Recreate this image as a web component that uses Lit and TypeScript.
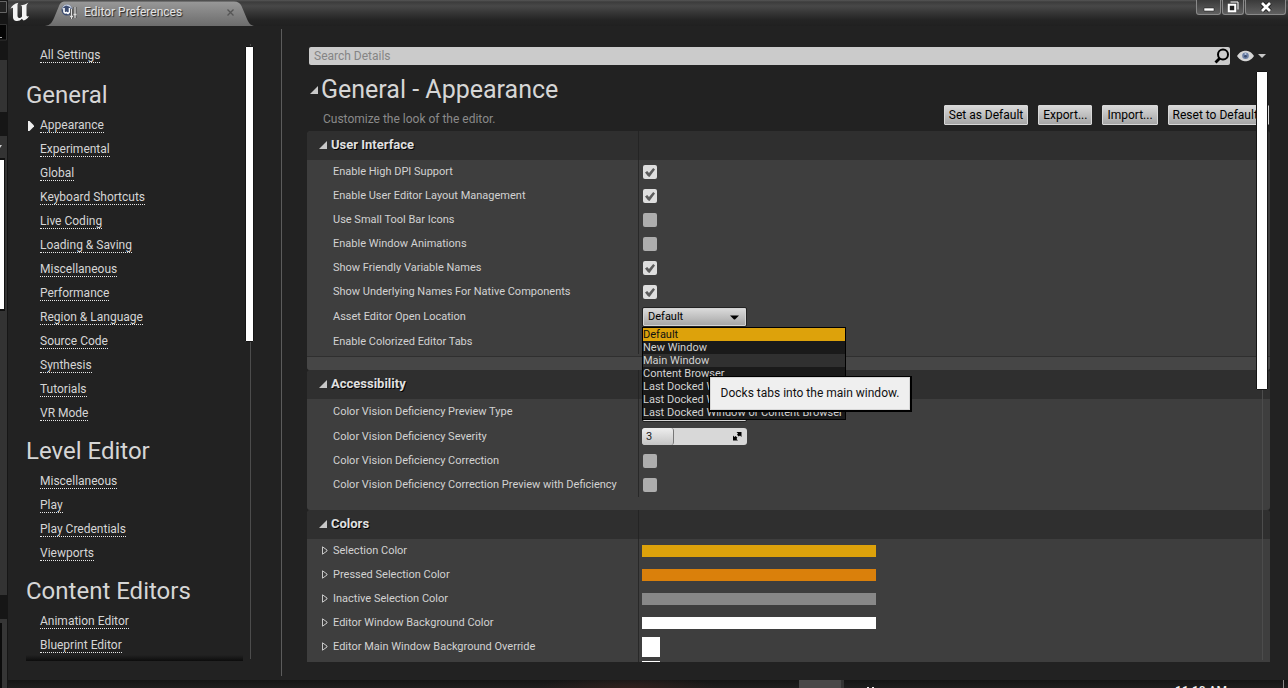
import { LitElement, html, css, svg, nothing } from "lit";
import { customElement, property } from "lit/decorators.js";
import { classMap } from "lit/directives/class-map.js";

type Kind = "check" | "combo" | "slider" | "color" | "swatch" | "empty";

interface Row {
  name: string;
  kind: Kind;
  checked?: boolean;
  color?: string;
  expandable?: boolean;
  open?: boolean;
}

interface Category {
  title: string;
  rows: Row[];
  advanced?: boolean;
}

const NAV = [
  {
    title: "General",
    items: [
      "Appearance", "Experimental", "Global", "Keyboard Shortcuts", "Live Coding",
      "Loading & Saving", "Miscellaneous", "Performance", "Region & Language",
      "Source Code", "Synthesis", "Tutorials", "VR Mode",
    ],
  },
  { title: "Level Editor", items: ["Miscellaneous", "Play", "Play Credentials", "Viewports"] },
  { title: "Content Editors", items: ["Animation Editor", "Blueprint Editor"] },
];

const CATEGORIES: Category[] = [
  {
    title: "User Interface",
    advanced: true,
    rows: [
      { name: "Enable High DPI Support", kind: "check", checked: true },
      { name: "Enable User Editor Layout Management", kind: "check", checked: true },
      { name: "Use Small Tool Bar Icons", kind: "check" },
      { name: "Enable Window Animations", kind: "check" },
      { name: "Show Friendly Variable Names", kind: "check", checked: true },
      { name: "Show Underlying Names For Native Components", kind: "check", checked: true },
      { name: "Asset Editor Open Location", kind: "combo", open: true },
      { name: "Enable Colorized Editor Tabs", kind: "empty" },
    ],
  },
  {
    title: "Accessibility",
    rows: [
      { name: "Color Vision Deficiency Preview Type", kind: "combo" },
      { name: "Color Vision Deficiency Severity", kind: "slider" },
      { name: "Color Vision Deficiency Correction", kind: "check" },
      { name: "Color Vision Deficiency Correction Preview with Deficiency", kind: "check" },
    ],
  },
  {
    title: "Colors",
    rows: [
      { name: "Selection Color", kind: "color", color: "#dda20b", expandable: true },
      { name: "Pressed Selection Color", kind: "color", color: "#da800b", expandable: true },
      { name: "Inactive Selection Color", kind: "color", color: "#888888", expandable: true },
      { name: "Editor Window Background Color", kind: "color", color: "#ffffff", expandable: true },
      { name: "Editor Main Window Background Override", kind: "swatch", expandable: true },
      { name: "", kind: "swatch" },
    ],
  },
];

const LOCATIONS = [
  "Default", "New Window", "Main Window", "Content Browser",
  "Last Docked Window or New Window", "Last Docked Window or Main Window",
  "Last Docked Window or Content Browser",
];

const openTriangle = svg`<svg width="8" height="8" viewBox="0 0 8 8" aria-hidden="true"><path d="M8 0V8H0Z" fill="#c8c8c8"/></svg>`;

@customElement("property-row")
class PropertyRow extends LitElement {
  @property({ attribute: false }) row!: Row;

  static styles = css`
    :host { display: grid; grid-template-columns: 331px minmax(0, 1fr); font-size: 11px; color: #d2d2d2; height: 24px; }
    :host(.tall) { height: 25px; }
    .name { display: flex; align-items: center; padding-left: 15px; padding-bottom: 1px; white-space: nowrap; }
    .arrow { width: 11px; display: flex; }
    .value { display: flex; align-items: center; border-left: 1px solid #282828; padding-left: 3px; }
    input, select, button { font: inherit; margin: 0; }
    .check { appearance: none; width: 14px; height: 14px; margin-left: 1px; border-radius: 2px; background: #adadad; }
    .check:checked { background: #dedede; }
    .check:checked::before { content: ""; display: block; width: 10px; height: 9px; margin: 3px 2px; background: #5c5c5c; clip-path: polygon(0 50%, 22% 32%, 40% 55%, 82% 0, 100% 16%, 45% 100%, 30% 92%); }
    .combo { position: relative; display: flex; width: 105px; height: 20px; }
    .select { appearance: none; width: 105px; height: 20px; padding: 0 5px; border: 1px solid #222; outline: 0; border-radius: 2px; color: #000; background: linear-gradient(#dcdcdc, #a4a4a4); box-shadow: inset 0 0 0 1px #d4d4d4; }
    .caret { position: absolute; right: 8px; top: 8px; pointer-events: none; }
    .menu { position: absolute; z-index: 2; left: 0; top: 20px; width: 202px; margin: 0; padding: 0; border: 1px solid #000; list-style: none; background: #1a1a1a; }
    .option { height: 13px; line-height: 13px; white-space: nowrap; color: #d2d2d2; }
    .option.picked { background: #dda20b; color: #111; }
    .option.hover { background: #303030; }
    .tip { position: absolute; z-index: 3; left: 67px; top: 69px; box-sizing: border-box; width: 203px; height: 36px; line-height: 32px; text-align: center; font-size: 12px; color: #111; white-space: nowrap; background: #efefef; border: solid #000; border-width: 1px 2px 2px 1px; box-shadow: inset 0 0 0 1px #d8d8d8; }
    .slider { position: relative; display: flex; align-items: center; width: 105px; height: 17px; border-radius: 3px; background: #d8d8d8; overflow: hidden; }
    .fill { width: 32px; height: 17px; box-sizing: border-box; border-right: 1px solid #777; border-radius: 3px; background: linear-gradient(#eee, #c4c4c4); }
    .number { position: absolute; inset: 0; width: 105px; padding: 0 4px; border: 0; color: #222; background: none; }
    .expand { position: absolute; right: 5px; top: 4px; }
    .bar { width: 234px; height: 12px; padding: 0; border: 0; }
    .swatch { width: 18px; height: 20px; padding: 0; border: 0; background: #fff; }
  `;

  private control() {
    const r = this.row;
    switch (r.kind) {
      case "check":
        return html`<input id="field" class="check" type="checkbox" .checked=${!!r.checked} />`;
      case "combo":
        return html`<div class="combo">
          <select id="field" class="select"><option>${r.open ? "Default" : "Normal Vision"}</option></select>
          <svg class="caret" width="9" height="5" viewBox="0 0 9 5" aria-hidden="true"><path d="M0 0.5H9L5 4.5H4Z" /></svg>
          ${r.open
            ? html`<ul class="menu" role="listbox" aria-label=${r.name}>
                  ${LOCATIONS.map((l, i) => html`<li role="option" aria-selected=${i === 0 ? "true" : "false"}
                    class=${classMap({ option: true, picked: i === 0, hover: i === 2 })}>${l}</li>`)}
                </ul>
                <div class="tip" role="tooltip">Docks tabs into the main window.</div>`
            : nothing}
        </div>`;
      case "slider":
        return html`<div class="slider">
          <div class="fill"></div>
          <input id="field" class="number" type="text" inputmode="numeric" value="3" />
          <svg class="expand" width="9" height="9" viewBox="0 0 9 9" aria-hidden="true"><path d="M3.500 0H8.500V5L7 3.500L5.800 4.600L4 2.800L5 1.600ZM5 8.500H0V3.500L1.500 5L2.600 4L4.400 5.800L3.500 7Z" /></svg>
        </div>`;
      case "color":
        return html`<button id="field" class="bar" style="background:${r.color}"></button>`;
      case "swatch":
        return html`<button id="field" class="swatch"></button>`;
      default:
        return nothing;
    }
  }

  render() {
    const r = this.row;
    return html`
      <label class="name" for="field">
        <span class="arrow">${r.expandable
          ? svg`<svg width="6" height="9" viewBox="0 0 6 9" aria-hidden="true"><path d="M0.5 0.8V8.2L5 5V4Z" fill="none" stroke="#c8c8c8"/></svg>`
          : nothing}</span>${r.name}
      </label>
      <div class="value">${this.control()}</div>`;
  }
}

@customElement("app-root")
class AppRoot extends LitElement {
  static styles = css`
    :host { display: grid; grid-template: minmax(0, 1fr) 8px / 8px minmax(0, 1fr); height: 100vh; overflow: hidden; font-family: Roboto, "Liberation Sans", sans-serif; color: #d6d6d6; background: #181818; }
    .behind { grid-row: 1 / 3; overflow: hidden; }
    .behind svg { display: block; }
    .window { display: flex; flex-direction: column; background: #222; min-width: 0; min-height: 0; }
    .titlebar { display: flex; height: 26px; background: linear-gradient(#565656 0, #3c3c3c 2px, #484848 6px, #383838 12px, #242424 20px, #202020 26px); }
    .logo { padding: 2px 0 0 2px; width: 32px; }
    .tab { position: relative; width: 212px; height: 26px; }
    .shape { position: absolute; inset: 0; }
    .tabrow { position: relative; display: flex; align-items: center; height: 24px; padding: 0 20px 0 19px; font-size: 12px; text-shadow: 1px 1px 1px #222; }
    .title { flex: 1; padding-left: 7px; color: #e4e4e4; }
    .closetab { padding: 0; border: 0; background: none; display: flex; }
    .buttons { display: flex; margin-left: auto; margin-right: 2px; height: 15px; gap: 1px; }
    .win { display: flex; align-items: center; justify-content: center; padding: 0; height: 15px; width: 25px; border: 1px solid #8a8a8a; border-top: 0; border-radius: 0 0 3px 3px; background: linear-gradient(#3a3a3a, #606060); }
    .win.mid { width: 22px; }
    .win.close { width: 41px; }
    .body { flex: 1; min-height: 0; display: grid; grid-template: minmax(0, 1fr) / 273px minmax(0, 1fr); }
    .sidebar { position: relative; overflow: hidden; margin: 18px 0 19px; padding: 0 0 0 18px; }
    .line { display: flex; align-items: flex-start; height: 24px; padding-left: 14px; position: relative; }
    .link { margin-top: 5px; line-height: 13px; font-size: 12px; color: #d6d6d6; text-decoration: none; border-bottom: 1px dotted #e8e8e8; white-space: nowrap; }
    .current { position: absolute; left: 2px; top: 7px; }
    .group { margin: 0; padding: 11px 0 5px; line-height: 28px; font-size: 24px; font-weight: 400; }
    .group:first-of-type { padding-top: 13px; }
    .shade { position: absolute; left: 18px; right: 38px; bottom: 0; height: 6px; background: linear-gradient(transparent, #0c0c0c); }
    .track { position: absolute; top: 0; bottom: 2px; width: 1px; background: #4c4c4c; }
    .side { right: 30px; }
    .thumb { position: absolute; background: #fff; border: 1px solid #151515; border-radius: 1px; box-sizing: border-box; }
    .side-thumb { right: 27px; width: 9px; top: 2px; height: 48%; }
    .pane { display: flex; flex-direction: column; min-width: 0; min-height: 0; margin: 3px 0 4px; border-left: 1px solid #5c5c5c; padding: 18px 18px 14px 25px; }
    .searchline { display: flex; align-items: center; gap: 7px; padding-left: 2px; margin-right: 4px; }
    .searchbox { position: relative; display: flex; flex: 1; height: 18px; }
    .search { flex: 1; height: 18px; box-sizing: border-box; margin: 0; padding: 0 5px; border: 0; border-radius: 2px; font: 12px Roboto, sans-serif; background: #cbcbcb; color: #222; }
    .search::placeholder { color: #858585; opacity: 1; }
    .glass { position: absolute; right: 0; top: 1px; }
    .eye { display: flex; align-items: center; gap: 4px; padding: 0; border: 0; background: none; }
    .scroll { position: relative; flex: 1; min-height: 0; overflow: hidden; margin-top: 6px; }
    .head { display: flex; height: 60px; }
    .headtext { flex: 1; padding: 4px 0 0 3px; }
    .h { display: flex; align-items: center; gap: 3px; margin: 0; line-height: 30px; font-size: 25px; font-weight: 400; white-space: nowrap; }
    .sub { margin: 0; padding: 5px 0 0 13px; line-height: 18px; font-size: 12px; color: #8a8a8a; }
    .actions { display: flex; gap: 10px; padding: 34px 1px 0 0; }
    .act { height: 20px; padding: 0 4px; border: 1px solid #d8d8d8; border-radius: 1px; font: 12px Roboto, sans-serif; color: #000; background: linear-gradient(#d8d8d8, #a6a6a6); white-space: nowrap; }
    .cat { background: #3e3e3e; border-radius: 4px 4px 3px 3px; padding-bottom: 13px; }
    .cat.adv { padding-bottom: 0; }
    .cathead { display: grid; grid-template-columns: 331px 1fr; height: 29px; background: #2f2f2f; border-radius: 4px 4px 0 0; }
    .cattitle { display: flex; align-items: center; gap: 4px; margin: 0; padding: 0 0 2px 12px; font-size: 13px; font-weight: 700; color: #e0e0e0; text-shadow: 1px 1px 0 #000; }
    .catline { border-left: 1px solid #242424; }
    .more { margin-top: 2px; height: 13px; border-top: 1px solid #2f2f2f; background: #464646; border-radius: 0 0 3px 3px; }
    .main-track { right: 7px; }
    .main-thumb { right: 2px; width: 12px; top: 0; height: 54%; }
    .footer { overflow: hidden; display: flex; background: radial-gradient(ellipse 90px 12px at 620px 8px, #30201d, transparent), linear-gradient(#151515, #1e1e1e); }
    .chip { width: 42px; height: 8px; margin-right: auto; margin-left: 791px; background: #484848; border-right: 3px solid #333; }
    .dots { width: 7px; height: 1px; margin: 7px 301px 0 0; background: repeating-linear-gradient(90deg, #eee 0 2px, transparent 2px 5px); }
    .clock { height: 8px; padding: 4px 56px 0 0; border-right: 1px solid #888; margin-right: 4px; line-height: 14px; font-size: 12px; font-weight: 500; color: #eee; box-sizing: border-box; white-space: nowrap; }
  `;

  private navLine(item: string, current = false) {
    return html`<div class="line">
      ${current ? svg`<svg class="current" width="6" height="10" viewBox="0 0 6 10" aria-hidden="true"><path d="M0 0H1.5L6 4.5V5.5L1.5 10H0Z" fill="#eee"/></svg>` : nothing}
      <a class="link" href="#">${item}</a>
    </div>`;
  }

  private category(c: Category) {
    return html`<section class=${classMap({ cat: true, adv: !!c.advanced })}>
      <div class="cathead"><h2 class="cattitle">${openTriangle}${c.title}</h2><div class="catline"></div></div>
      ${c.rows.map((r) => html`<property-row class=${["combo", "slider", "empty"].includes(r.kind) ? "tall" : ""} .row=${r}></property-row>`)}
      ${c.advanced ? html`<div class="more"></div>` : nothing}
    </section>`;
  }

  render() {
    return html`
      <div class="behind" aria-hidden="true">
        <svg width="8" height="688" viewBox="0 0 8 688">
          <rect width="8" height="688" fill="#161616" />
          <path d="M0 1.5H6.5V12.5H0" fill="#222" stroke="#666" />
          <path d="M0 24.500H6.5V40H0" fill="#050505" stroke="#333" />
          <path d="M0 37.500H2" stroke="#aaa" />
          <rect y="60" width="7" height="52" fill="#333" />
          <rect y="136" width="7" height="459" fill="#333" />
          <path d="M0 145H2L0 148Z" fill="#ccc" />
          <rect y="158" width="5" height="153" fill="#111" />
          <rect y="160" width="4" height="149" fill="#fff" />
          <rect y="619" width="7" height="69" fill="#363636" />
          <rect y="623" width="2" height="65" fill="#0c0c0c" />
        </svg>
      </div>
      <div class="window">
        <header class="titlebar">
          <div class="logo">
            <svg width="20" height="20" viewBox="0 0 20 20" role="img" aria-label="Unreal"><path d="M0.500 7C1.500 4 4.500 1.500 8.500 0.800C7.500 1.800 7.500 2.500 7.500 4V13.500C7.500 15 8.200 16 9.200 16C10.200 16 11 15.500 12 14.500V5.500C12 4 11.500 3.500 10.500 3.300C13.500 3.200 16.500 2.200 18.500 0.600C17.300 2 16.500 3 16.500 4.500V13C16.500 14.500 17.500 14.800 19 14C17.800 16.500 15.500 18 13.500 18.600L11.800 16.800C10.500 18.400 8.500 19.200 6.500 19C4.500 18.800 3 17.500 3 15.500V6.500C3 5.300 2 5.500 0.500 7Z" fill="#f4f4f4"/></svg>
          </div>
          <div class="tab">
            <svg class="shape" width="212" height="26" viewBox="0 0 212 26" aria-hidden="true">
              <defs><linearGradient id="g" x1="0" y1="0" x2="0" y2="1"><stop offset="0" stop-color="#989898" /><stop offset="1" stop-color="#6c6c6c" /></linearGradient></defs>
              <path d="M3 26C9 25 10 22 12 18L17 6C18.500 2.500 20 1.500 23 1.500H192C196 1.500 198 3 199.500 6L205 19C207 23 208 25 212 26Z" fill="url(#g)" />
            </svg>
            <div class="tabrow">
              <svg width="16" height="16" viewBox="0 0 16 16" aria-hidden="true">
                <circle cx="6" cy="6" r="5.500" fill="#3c4c70" />
                <path d="M1 6A5 5 0 0 1 11 5L8 2.500L5 1.500L2.500 3Z" fill="#c9d2e4" />
                <path d="M3 4V7.500Q3.500 9.500 5.500 8.500L7 9.500L8.500 8V4" fill="none" stroke="#fff" stroke-width="1.600" />
                <path d="M10.500 5V15M14 3V14" stroke="#444" stroke-width="3" />
                <path d="M10.500 5V15M14 3V14M9 12.500H12M12.500 10.500H15.500" stroke="#ddd" stroke-width="1.300" />
              </svg>
              <span class="title">Editor Preferences</span>
              <button class="closetab" aria-label="Close tab"><svg width="7" height="7" viewBox="0 0 7 7"><path d="M0.500 0.500L6.500 6.500M6.500 0.500L0.500 6.500" stroke="#555" stroke-width="1.300" /></svg></button>
            </div>
          </div>
          <div class="buttons">
            <button class="win" aria-label="Minimize"><svg width="12" height="12" viewBox="0 0 12 12"><path d="M1 7H11V10H1Z" fill="#fff" stroke="#111" stroke-width="0.500" /></svg></button>
            <button class="win mid" aria-label="Restore"><svg width="12" height="12" viewBox="0 0 12 12"><path d="M3.500 1H11V8.500" fill="none" stroke="#fff" /><path d="M1.800 3.800H8.200V10.200H1.800Z" fill="#222" stroke="#fff" stroke-width="2" /></svg></button>
            <button class="win close" aria-label="Close"><svg width="12" height="12" viewBox="0 0 12 12"><path d="M2 2L10 10M10 2L2 10" stroke="#111" stroke-width="4.500" /><path d="M2 2L10 10M10 2L2 10" stroke="#fff" stroke-width="2.800" /></svg></button>
          </div>
        </header>
        <div class="body">
          <nav class="sidebar">
            ${this.navLine("All Settings")}
            ${NAV.map((g, gi) => html`<h2 class="group">${g.title}</h2>${g.items.map((it, i) => this.navLine(it, gi === 0 && i === 0))}`)}
            <div class="shade"></div>
            <div class="track side"></div>
            <div class="thumb side-thumb"></div>
          </nav>
          <main class="pane">
            <div class="searchline">
              <div class="searchbox">
                <input class="search" type="text" placeholder="Search Details" aria-label="Search Details" />
                <svg class="glass" width="16" height="16" viewBox="0 0 16 16" aria-hidden="true"><circle cx="9" cy="6.500" r="5" fill="none" stroke="#000" stroke-width="2" /><path d="M5.500 10.500L1.500 14.500" stroke="#000" stroke-width="2.800" /></svg>
              </div>
              <button class="eye" aria-label="View options">
                <svg width="17" height="12" viewBox="0 0 17 12"><path d="M0 6C3 1.500 6 0.800 8.500 0.800S14 1.500 17 6C14 10.500 11 11.200 8.500 11.200S3 10.500 0 6Z" fill="#d6d6d6" /><circle cx="8.500" cy="5.800" r="3.300" fill="#6c80a6" /><circle cx="8.500" cy="6.200" r="1.300" fill="#3a4a6c" /><circle cx="8.500" cy="4" r="1" fill="#b9c6df" /></svg>
                <svg width="8" height="4" viewBox="0 0 8 4"><path d="M0 0H8L4 4Z" fill="#c8c8c8" /></svg>
              </button>
            </div>
            <div class="scroll">
              <div class="head">
                <div class="headtext">
                  <h1 class="h">${openTriangle}General - Appearance</h1>
                  <p class="sub">Customize the look of the editor.</p>
                </div>
                <div class="actions">
                  <button class="act">Set as Default</button>
                  <button class="act">Export...</button>
                  <button class="act">Import...</button>
                  <button class="act">Reset to Defaults</button>
                </div>
              </div>
              ${CATEGORIES.map((c) => this.category(c))}
              <div class="track main-track"></div>
              <div class="thumb main-thumb"></div>
            </div>
          </main>
        </div>
      </div>
      <div class="footer" aria-hidden="true">
        <div class="chip"></div><div class="dots"></div><div class="clock">11:10 AM</div>
      </div>`;
  }
}
